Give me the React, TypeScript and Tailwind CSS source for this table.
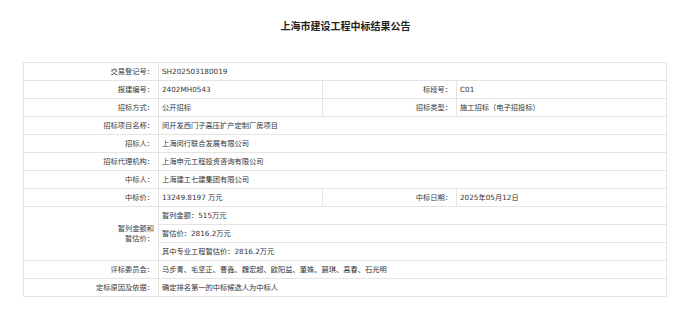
import React from "react";

const L = "bg-white flex items-center justify-end pr-[4px] text-right text-[#3a3a3a]";
const V = "bg-white flex items-center pl-[3px] text-[#333] whitespace-nowrap";

export default function App() {
  return (
    <div
      className="w-[691px] h-[321px] bg-white"
      style={{ fontFamily: '"DejaVu Sans", "Noto Sans CJK SC", sans-serif' }}
    >
      <div className="pt-[21px] h-[62px] text-center text-[10px] leading-[12px] font-bold text-[#222]">
        上海市建设工程中标结果公告
      </div>
      <div className="ml-[23px] w-[644px] grid grid-cols-[134px_163px_133px_209px] auto-rows-[17px] gap-px p-px bg-[#e4e4e4] text-[7.25px] leading-[10px]">
        <div className={L}>交易登记号：</div>
        <div className={`${V} col-span-3`}>SH202503180019</div>

        <div className={L}>报建编号：</div>
        <div className={V}>2402MH0543</div>
        <div className={L}>标段号：</div>
        <div className={V}>C01</div>

        <div className={L}>招标方式：</div>
        <div className={V}>公开招标</div>
        <div className={L}>招标类型：</div>
        <div className={V}>施工招标（电子招投标）</div>

        <div className={L}>招标项目名称：</div>
        <div className={`${V} col-span-3`}>闵开发西门子高压扩产定制厂房项目</div>

        <div className={L}>招标人：</div>
        <div className={`${V} col-span-3`}>上海闵行联合发展有限公司</div>

        <div className={L}>招标代理机构：</div>
        <div className={`${V} col-span-3`}>上海申元工程投资咨询有限公司</div>

        <div className={L}>中标人：</div>
        <div className={`${V} col-span-3`}>上海建工七建集团有限公司</div>

        <div className={L}>中标价：</div>
        <div className={V}>13249.8197 万元</div>
        <div className={L}>中标日期：</div>
        <div className={V}>2025年05月12日</div>

        <div className={`${L} row-span-3`}>
          暂列金额和
          <br />
          暂估价：
        </div>
        <div className={`${V} col-span-3`}>暂列金额：515万元</div>
        <div className={`${V} col-span-3`}>暂估价：2816.2万元</div>
        <div className={`${V} col-span-3`}>其中专业工程暂估价：2816.2万元</div>

        <div className={L}>评标委员会：</div>
        <div className={`${V} col-span-3`}>马步青、毛坚正、曹鑫、魏宏超、欧阳益、董姝、聂琪、高春、石光明</div>

        <div className={L}>定标原因及依据：</div>
        <div className={`${V} col-span-3`}>确定排名第一的中标候选人为中标人</div>
      </div>
    </div>
  );
}
